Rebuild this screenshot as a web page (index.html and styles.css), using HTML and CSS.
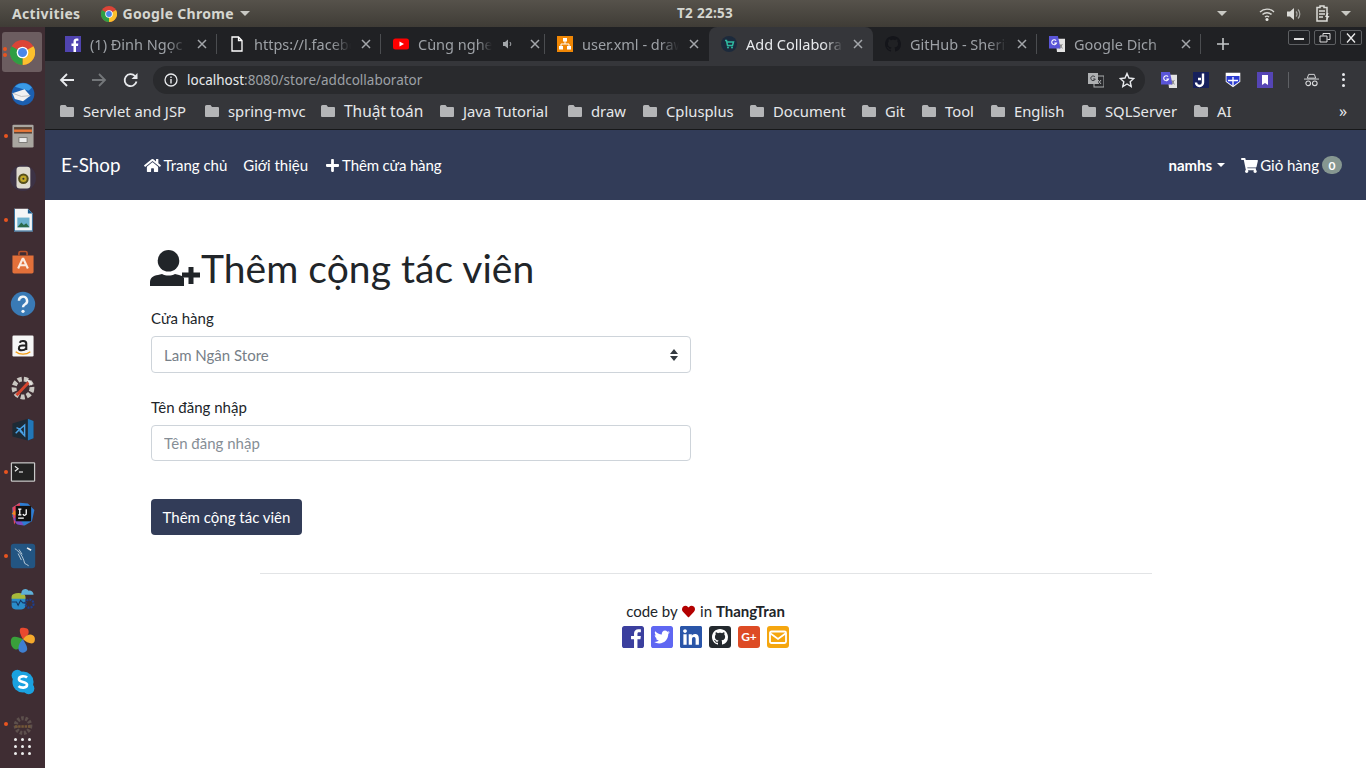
FILE: index.html
```html
<!DOCTYPE html>
<html lang="vi">
<head>
<meta charset="utf-8">
<title>Add Collaborator</title>
<link rel="stylesheet" href="styles.css">
</head>
<body>
<svg class="defs" width="0" height="0" aria-hidden="true">
  <symbol id="folder" viewBox="0 0 14 12"><path d="M1.5 0h4l1.5 2h6A1 1 0 0 1 14 3v8a1 1 0 0 1-1 1H1a1 1 0 0 1-1-1V1.500A1.500 1.500 0 0 1 1.500 0z" fill="#b4b5b7"/></symbol>
  <symbol id="x" viewBox="0 0 10 10"><path d="M1 1l8 8M9 1l-8 8" stroke="#a3a6aa" stroke-width="1.500" fill="none"/></symbol>
  <symbol id="gt" viewBox="0 0 18 18"><path d="M7 3h11v15H9z" fill="#e3e3e3"/><path d="M0 0h10l3 14H0z" fill="#5a55d8"/><path d="M8 5.200A2.800 2.800 0 1 0 8.500 8H6" fill="none" stroke="#fff" stroke-width="1.200"/><path d="M12 9l3 5M15 9l-3 5" stroke="#777" stroke-width="1"/></symbol>
  <symbol id="chrome" viewBox="0 0 32 32"><circle cx="16" cy="16" r="16" fill="#db4437"/><path d="M16 16L30 8A16 16 0 0 1 16 32z" fill="#fbc02d"/><path d="M16 16L16 32A16 16 0 0 1 2 8z" fill="#2f9e44"/><circle cx="16" cy="16" r="7.500" fill="#fff"/><circle cx="16" cy="16" r="5.800" fill="#4a87e8"/></symbol>
</svg>

<header class="topbar">
  <span class="activities">Activities</span>
  <span class="app"><svg class="ic16" viewBox="0 0 32 32"><use href="#chrome"/></svg>Google Chrome<i class="tri"></i></span>
  <span class="clock">T2 22:53</span>
  <span class="tray">
    <i class="tri"></i>
    <svg class="wifi" viewBox="0 0 16 14"><path d="M1 5a10 10 0 0 1 14 0M3.500 7.500a6.500 6.500 0 0 1 9 0M6 10a3 3 0 0 1 4 0" stroke="#d8d8d4" stroke-width="1.400" fill="none"/><circle cx="8" cy="12.500" r="1.500" fill="#e8e8e4"/></svg>
    <svg class="vol" viewBox="0 0 16 14"><path d="M1 4.500h3L8 1v12L4 9.500H1z" fill="#dcdcd8"/><path d="M10 4.500a3.500 3.500 0 0 1 0 5M12 2.500a6.500 6.500 0 0 1 0 9" stroke="#a8a8a4" stroke-width="1.200" fill="none"/></svg>
    <svg class="batt" viewBox="0 0 14 17"><path d="M1 2.500h3V1h4v1.500h3V16H1z" fill="none" stroke="#dcdcd8" stroke-width="1.500"/><path d="M3 6h6M3 9h6M3 12h4" stroke="#dcdcd8" stroke-width="1.300"/><path d="M11 8l-2 4h2l-1 4 3.500-5h-2l1-3z" fill="#dcdcd8"/></svg>
    <i class="tri"></i>
  </span>
</header>

<div class="desktop">
  <nav class="dock">
    <div class="dock-item active"><i class="dot"></i><i class="dot dot2"></i><svg class="dk" viewBox="0 0 32 32"><use href="#chrome"/></svg></div>
    <div class="dock-item"><svg class="dk" viewBox="0 0 32 32"><circle cx="16" cy="16" r="14" fill="#1b5fb0"/><path d="M6 7a14 14 0 0 1 21 1l-4 4z" fill="#3a9ae6"/><path d="M3 15l15-5 7 8-9 7-10-3z" fill="#f1f1f1"/><path d="M3 15l11 4 11-1" fill="none" stroke="#b5b5b5"/></svg></div>
    <div class="dock-item"><i class="dot"></i><svg class="dk" viewBox="0 0 32 32"><rect x="3" y="2" width="26" height="28" rx="1.500" fill="#a9a6a0"/><rect x="5" y="5" width="22" height="8" fill="#5c4436"/><rect x="5" y="8" width="22" height="3" fill="#e8783a"/><rect x="11" y="18" width="10" height="6" fill="#ececec" stroke="#6f6d69"/></svg></div>
    <div class="dock-item"><svg class="dk" viewBox="0 0 32 32"><circle cx="16" cy="16" r="16" fill="#3c3245"/><rect x="8" y="2" width="17" height="27" rx="4" fill="#dedbd0"/><circle cx="16.500" cy="17" r="6.500" fill="#57501c"/><circle cx="16.500" cy="17" r="4" fill="#c2a92a"/><circle cx="16.500" cy="17" r="1.300" fill="#333"/></svg></div>
    <div class="dock-item"><i class="dot"></i><svg class="dk" viewBox="0 0 32 32"><path d="M5 2h17l6 6v22H5z" fill="#f4f6f7"/><path d="M22 2l6 6h-6z" fill="#165a8e"/><path d="M5 2h1v28H5zM27 8h1v22h-1z M5 29h23v1H5z" fill="#165a8e"/><rect x="9" y="13" width="15" height="12" fill="#6db2cf"/><path d="M9 25l5-6 3 3 3-2 4 5z" fill="#2b6a4a"/></svg></div>
    <div class="dock-item"><svg class="dk" viewBox="0 0 32 32"><path d="M3 8h26v20a2 2 0 0 1-2 2H5a2 2 0 0 1-2-2z" fill="#e2703a"/><path d="M11 8V5a2 2 0 0 1 2-2h6a2 2 0 0 1 2 2v3" fill="none" stroke="#b9522a" stroke-width="2"/><path d="M16 11l-6 13M16 11l6 13M12 20h8" stroke="#fbeadf" stroke-width="2.600" fill="none"/></svg></div>
    <div class="dock-item"><svg class="dk" viewBox="0 0 32 32"><circle cx="16" cy="16" r="15" fill="#3a7ab5"/><path d="M11 12a5 5 0 1 1 7.500 4.300c-1.800 1-2.500 1.800-2.500 3.700" fill="none" stroke="#f2f6fa" stroke-width="3"/><circle cx="16" cy="25" r="2" fill="#f2f6fa"/></svg></div>
    <div class="dock-item"><svg class="dk" viewBox="0 0 32 32"><rect x="3" y="3" width="26" height="26" rx="1.500" fill="#f6f6f6"/><path d="M12 12c1-3 8-3 8 1v8M20 15c-8 0-9 1-9 4s6 3 9 0" fill="none" stroke="#222" stroke-width="2.600"/><path d="M7 23c5 4 13 4 18 0" fill="none" stroke="#f39c12" stroke-width="1.600"/></svg></div>
    <div class="dock-item"><svg class="dk" viewBox="0 0 32 32"><circle cx="16" cy="16" r="11" fill="none" stroke="#c9c6c1" stroke-width="6" stroke-dasharray="5 2.500"/><path d="M8 25L24 8" stroke="#d6452f" stroke-width="3.500"/><path d="M19 6a6 6 0 0 1 8 7l-3-2-2-3z" fill="#e4e2de"/></svg></div>
    <div class="dock-item"><svg class="dk" viewBox="0 0 32 32"><path d="M3 8l19-6 7 3v21l-7 3-19-5z" fill="#1d2a35"/><path d="M22 2l7 3v21l-7 3z" fill="#2277b8"/><path d="M7 20l5-5 4 5M8 13l4 2 6-5v13l-6-6" fill="none" stroke="#4aa3e8" stroke-width="1.800"/></svg></div>
    <div class="dock-item"><i class="dot"></i><svg class="dk" viewBox="0 0 32 32"><rect x="1" y="4" width="30" height="24" rx="1.500" fill="#c8c8c8"/><rect x="2.500" y="5.500" width="27" height="21" fill="#222"/><path d="M6 9l4 3-4 3" fill="none" stroke="#eee" stroke-width="1.400"/><path d="M11 16h5" stroke="#eee" stroke-width="1.400"/></svg></div>
    <div class="dock-item"><svg class="dk" viewBox="0 0 32 32"><path d="M3 8l9-6 10 1 8 8-3 14-9 5-10-2-5-9z" fill="#2f7dd3"/><path d="M3 8l9-6 1 14-8 13z" fill="#e8455e"/><path d="M4 22l5 7 8 1-7-12z" fill="#7b4bc2"/><path d="M2 16l4-5 3 7z" fill="#f08a24"/><rect x="7" y="6" width="19" height="19" fill="#111"/><path d="M10 10h4M12 10v7M10 17h4M20 10v5a2 2 0 0 1-4 1M10 21h7" stroke="#fff" stroke-width="1.600" fill="none"/></svg></div>
    <div class="dock-item"><i class="dot"></i><svg class="dk" viewBox="0 0 32 32"><rect x="1" y="1" width="30" height="30" rx="4" fill="#235582"/><path d="M6 7c5 3 10 9 12 18 2 1 3 2 5 3M15 14l-4-6M14 21l-4-8" fill="none" stroke="#c7d5e1" stroke-width="1.100"/><path d="M21 6l5 3" stroke="#eee" stroke-width="2"/></svg></div>
    <div class="dock-item"><svg class="dk" viewBox="0 0 32 32"><rect x="2" y="12" width="17" height="18" rx="5" fill="#2a8cc9"/><path d="M2 14a8 4 0 0 1 17 0v3H2z" fill="#a7b83a"/><path d="M14 10a5 5 0 0 1 9-3 5 5 0 0 1 6 5H13z" fill="#5fb0d9"/><circle cx="24" cy="23" r="5" fill="none" stroke="#1d3f8c" stroke-width="2.600" stroke-dasharray="2.500 1.300"/><path d="M2 21h6l2 4 3-6 3 3h3" stroke="#163764" stroke-width="1.300" fill="none"/></svg></div>
    <div class="dock-item"><svg class="dk" viewBox="0 0 32 32"><path d="M16 15C8 11 1 10 1 18s6 11 9 9 5-8 6-12z" fill="#39a03a"/><path d="M16 15C12 9 10 1 15 1s8 1 8 5-4 6-7 9z" fill="#e8492f"/><path d="M16 15c3-4 8-7 12-5s3 9 0 10-9-2-12-5z" fill="#f4a92c"/><path d="M16 15c-4 3-7 10-5 14s9 3 10-1-3-9-5-13z" fill="#3f7fd0"/></svg></div>
    <div class="dock-item"><svg class="dk" viewBox="0 0 32 32"><circle cx="9" cy="8" r="7" fill="#1ba2e0"/><circle cx="23" cy="24" r="7" fill="#1ba2e0"/><circle cx="16" cy="16" r="13" fill="#1ba2e0"/><path d="M21 10.500c-2-2-10-2.500-10 2 0 4.500 10 2.500 10 7 0 4.500-8 4-10.500 1.500" fill="none" stroke="#fff" stroke-width="3.200"/></svg></div>
    <div class="dock-item dim"><i class="dot"></i><svg class="dk" viewBox="0 0 32 32"><circle cx="16" cy="18" r="9" fill="none" stroke="#6b6058" stroke-width="5" stroke-dasharray="3 2"/><path d="M6 19h20" stroke="#8a6a3a" stroke-width="3" stroke-dasharray="3 1"/></svg></div>
    <div class="dock-grid"><i></i><i></i><i></i><i></i><i></i><i></i><i></i><i></i><i></i></div>
  </nav>

  <div class="window">
    <div class="tabstrip">
      <div class="tab"><svg class="fav" viewBox="0 0 16 16"><rect width="16" height="16" fill="#5044b0"/><path d="M11 16v-6h2l.3-2.400H11V6c0-.7.300-1.200 1.200-1.200h1.200V2.700C13 2.600 12.300 2.600 11.500 2.600 9.700 2.600 8.500 3.700 8.500 5.700v1.900h-2V10h2v6z" fill="#fff"/></svg><span class="title">(1) Đinh Ngọc Thắng</span><svg class="cl"><use href="#x"/></svg></div>
      <div class="tab"><svg class="fav" viewBox="0 0 16 16"><path d="M3 1h6.500L13 4.500V15H3z M9.500 1v3.500H13" fill="none" stroke="#fff" stroke-width="1.300"/></svg><span class="title">https://l.facebook.com</span><svg class="cl"><use href="#x"/></svg></div>
      <div class="tab"><svg class="fav" viewBox="0 0 16 16"><rect y="2.500" width="16" height="11" rx="2.500" fill="#f00"/><path d="M6.500 5.500L11 8l-4.500 2.500z" fill="#fff"/></svg><span class="title short">Cùng nghe nhạc</span><svg class="sound" viewBox="0 0 12 12"><path d="M1 4h2l3-2.500v9L3 8H1z" fill="#a3a6aa"/><path d="M8 4a3 3 0 0 1 0 4" stroke="#a3a6aa" fill="none"/></svg><svg class="cl"><use href="#x"/></svg></div>
      <div class="tab"><svg class="fav" viewBox="0 0 16 16"><rect width="16" height="16" fill="#f08705"/><path d="M8 4v4M4 12V8h8v4" stroke="#fff" fill="none"/><path d="M6 2h4v3.500H6zM2 10h4v3.500H2zM10 10h4v3.500h-4z" fill="#fff"/></svg><span class="title">user.xml - draw.io</span><svg class="cl"><use href="#x"/></svg></div>
      <div class="tab tab-active"><svg class="fav" viewBox="0 0 16 16"><circle cx="8" cy="8" r="8" fill="#1c2a3c"/><path d="M4 4.500h1.500l1 5h5L12.500 6H6" stroke="#2fb9a0" stroke-width="1.500" fill="none"/><circle cx="7" cy="11.500" r="1" fill="#2fb9a0"/><circle cx="11" cy="11.500" r="1" fill="#2fb9a0"/></svg><span class="title">Add Collaborator</span><svg class="cl"><use href="#x"/></svg></div>
      <div class="tab"><svg class="fav" viewBox="0 0 16 16"><path fill="#14151a" d="M8 0C3.580 0 0 3.580 0 8c0 3.540 2.290 6.530 5.470 7.590.4.070.55-.17.55-.38 0-.19-.01-.82-.01-1.490-2.010.37-2.530-.49-2.690-.94-.09-.23-.48-.94-.82-1.130-.28-.15-.68-.52-.01-.53.63-.01 1.080.58 1.230.82.72 1.210 1.870.87 2.330.66.07-.52.28-.87.51-1.070-1.780-.2-3.640-.89-3.640-3.950 0-.87.31-1.590.82-2.150-.08-.2-.36-1.020.08-2.120 0 0 .67-.21 2.200.82.64-.18 1.320-.27 2-.27.68 0 1.360.09 2 .27 1.530-1.040 2.200-.82 2.200-.82.44 1.100.16 1.920.08 2.120.51.56.82 1.270.82 2.150 0 3.070-1.870 3.750-3.650 3.950.29.25.54.73.54 1.480 0 1.070-.01 1.930-.01 2.200 0 .21.15.46.55.38A8.013 8.013 0 0016 8c0-4.420-3.580-8-8-8z"/></svg><span class="title">GitHub - Sheriff</span><svg class="cl"><use href="#x"/></svg></div>
      <div class="tab"><svg class="fav" viewBox="0 0 18 18"><use href="#gt"/></svg><span class="title">Google Dịch</span><svg class="cl"><use href="#x"/></svg></div>
      <svg class="newtab" viewBox="0 0 12 12"><path d="M6 0v12M0 6h12" stroke="#c4c7c9" stroke-width="1.600"/></svg>
      <div class="winctl">
        <span class="wbtn"><svg viewBox="0 0 12 10"><path d="M1 6h10" stroke="#ddd" stroke-width="2"/></svg></span>
        <span class="wbtn"><svg viewBox="0 0 12 10"><path d="M4 2.500V.5h7v6H8.500M1 3h7v6H1z" stroke="#ddd" fill="none"/></svg></span>
        <span class="wbtn"><svg viewBox="0 0 12 10"><path d="M2 .5l8 9M10 .5l-8 9" stroke="#eee" stroke-width="1.300"/></svg></span>
      </div>
    </div>

    <div class="toolbar">
      <svg class="tb" viewBox="0 0 16 16"><path d="M15 8H2M8 2L2 8l6 6" stroke="#e8eaed" stroke-width="1.800" fill="none"/></svg>
      <svg class="tb" viewBox="0 0 16 16"><path d="M1 8h13M8 2l6 6-6 6" stroke="#74777a" stroke-width="1.800" fill="none"/></svg>
      <svg class="tb" viewBox="0 0 16 16"><path d="M13.500 9.500A6 6 0 1 1 12 4" stroke="#e8eaed" stroke-width="1.800" fill="none"/><path d="M14.500 1v6h-6z" fill="#e8eaed"/></svg>
      <div class="omnibox">
        <svg class="info" viewBox="0 0 14 14"><circle cx="7" cy="7" r="6" fill="none" stroke="#e8eaed" stroke-width="1.300"/><path d="M7 6v4.500M7 3.500v1.500" stroke="#e8eaed" stroke-width="1.400"/></svg>
        <span class="url"><b>localhost</b>:8080/store/addcollaborator</span>
        <svg class="omni-t" viewBox="0 0 16 16"><rect x="0" y="1" width="10" height="11" fill="#aeb0b2"/><rect x="6" y="4" width="10" height="11" fill="none" stroke="#aeb0b2"/><path d="M7 5A2.300 2.300 0 1 0 7.300 7H5.200" fill="none" stroke="#35363a"/><path d="M10 8l3 4M13 8l-3 4" stroke="#aeb0b2"/></svg>
        <svg class="omni-s" viewBox="0 0 16 16"><path d="M8 1.500l2 4.500 4.800.5-3.600 3.200 1 4.800L8 12l-4.200 2.500 1-4.800L1.200 6.500 6 6z" fill="none" stroke="#e8eaed" stroke-width="1.400"/></svg>
      </div>
      <div class="exts">
        <svg class="ext" viewBox="0 0 18 18"><use href="#gt"/></svg>
        <svg class="ext" viewBox="0 0 16 16"><rect width="16" height="16" fill="#16205c"/><path d="M10 1.500v9a3.500 3.500 0 0 1-7 0M5 7h3" stroke="#fff" stroke-width="2.400" fill="none"/></svg>
        <svg class="ext" viewBox="0 0 16 16"><path d="M.7.7h14.600v9L8 15.300.7 9.700z" fill="#fff"/><path d="M1.500 4h13v5.300L8 14 1.500 9.300z" fill="#2a3bd0"/><path d="M8 5v9M3 8.500h10" stroke="#fff" stroke-width="1.300"/></svg>
        <svg class="ext" viewBox="0 0 16 16"><rect width="16" height="16" fill="#5545b5"/><path d="M5 3h6v10L8 11l-3 2z" fill="#fff"/></svg>
      </div>
      <i class="tbsep"></i>
      <svg class="incog" viewBox="0 0 16 14"><path d="M5 1h6l1.500 4h-9zM0 6h16" stroke="#d9dadc" stroke-width="1" fill="none"/><circle cx="4.500" cy="10.500" r="2.500" fill="none" stroke="#d9dadc" stroke-width="1.200"/><circle cx="11.500" cy="10.500" r="2.500" fill="none" stroke="#d9dadc" stroke-width="1.200"/></svg>
      <span class="kebab"><i></i><i></i><i></i></span>
    </div>

    <div class="bookmarks">
      <a class="bm"><svg class="fold"><use href="#folder"/></svg>Servlet and JSP</a>
      <a class="bm"><svg class="fold"><use href="#folder"/></svg>spring-mvc</a>
      <a class="bm"><svg class="fold"><use href="#folder"/></svg><span class="big">Thuật toán</span></a>
      <a class="bm"><svg class="fold"><use href="#folder"/></svg>Java Tutorial</a>
      <a class="bm"><svg class="fold"><use href="#folder"/></svg>draw</a>
      <a class="bm"><svg class="fold"><use href="#folder"/></svg>Cplusplus</a>
      <a class="bm"><svg class="fold"><use href="#folder"/></svg>Document</a>
      <a class="bm"><svg class="fold"><use href="#folder"/></svg>Git</a>
      <a class="bm"><svg class="fold"><use href="#folder"/></svg>Tool</a>
      <a class="bm"><svg class="fold"><use href="#folder"/></svg>English</a>
      <a class="bm"><svg class="fold"><use href="#folder"/></svg>SQLServer</a>
      <a class="bm"><svg class="fold"><use href="#folder"/></svg>AI</a>
      <span class="more">»</span>
    </div>

    <div class="page">
      <div class="navbar">
        <a class="brand">E-Shop</a>
        <a class="nl"><svg class="ni home" viewBox="0 0 576 512"><path d="M280.370 148.260L96 300.110V464a16 16 0 0 0 16 16l112.060-.29a16 16 0 0 0 15.920-16V368a16 16 0 0 1 16-16h64a16 16 0 0 1 16 16v95.640a16 16 0 0 0 16 16.050L464 480a16 16 0 0 0 16-16V300L295.670 148.260a12.190 12.190 0 0 0-15.300 0zM571.600 251.470L488 182.560V44.050a12 12 0 0 0-12-12h-56a12 12 0 0 0-12 12v72.610L318.470 43a48 48 0 0 0-61 0L4.340 251.470a12 12 0 0 0-1.600 16.900l25.500 31A12 12 0 0 0 45.150 301l235.220-193.740a12.190 12.190 0 0 1 15.300 0L530.900 301a12 12 0 0 0 16.900-1.600l25.500-31a12 12 0 0 0-1.700-16.930z"/></svg>Trang chủ</a>
        <a class="nl about">Giới thiệu</a>
        <a class="nl addstore"><svg class="ni plus" viewBox="0 0 448 512"><path d="M416 208H272V64c0-17.670-14.330-32-32-32h-32c-17.670 0-32 14.330-32 32v144H32c-17.670 0-32 14.330-32 32v32c0 17.670 14.330 32 32 32h144v144c0 17.670 14.330 32 32 32h32c17.670 0 32-14.330 32-32V304h144c17.670 0 32-14.330 32-32v-32c0-17.670-14.330-32-32-32z"/></svg>Thêm cửa hàng</a>
        <a class="nl user">namhs<i class="caret"></i></a>
        <a class="nl cart"><svg class="ni home" viewBox="0 0 576 512"><path d="M528.120 301.319l47.273-208C578.806 78.301 567.391 64 551.990 64H159.208l-9.166-44.810C147.758 8.021 137.930 0 126.529 0H24C10.745 0 0 10.745 0 24v16c0 13.255 10.745 24 24 24h69.883l70.248 343.435C147.325 417.100 136 435.222 136 456c0 30.928 25.072 56 56 56s56-25.072 56-56c0-15.674-6.447-29.835-16.824-40h209.647C430.447 426.165 424 440.326 424 456c0 30.928 25.072 56 56 56s56-25.072 56-56c0-22.172-12.888-41.332-31.579-50.405l5.517-24.276c3.413-15.018-8.002-29.319-23.403-29.319H218.117l-6.545-32h293.145c11.206 0 20.920-7.754 23.403-18.681z"/></svg>Giỏ hàng<span class="badge">0</span></a>
      </div>

      <main class="content">
        <h1 class="heading"><svg class="h-ic" viewBox="0 0 50 36"><circle cx="18.500" cy="10.800" r="10.800"/><path d="M0 36v-3.500C0 28 3 25.500 8 25l4-1c4 2 9 2 13 0l4 1c2 .4 4 1.500 5 3v8z"/><path d="M32 22.500h6.500V17h5v5.500H50v5h-6.500V34h-5v-6.500H32z"/></svg>Thêm cộng tác viên</h1>
        <form class="form">
          <div class="group">
            <label class="lbl">Cửa hàng</label>
            <div class="control select">Lam Ngân Store<svg class="updown" viewBox="0 0 8 12"><path d="M4 0l4 5H0zM4 12L0 7h8z"/></svg></div>
          </div>
          <div class="group second">
            <label class="lbl">Tên đăng nhập</label>
            <input class="control" placeholder="Tên đăng nhập">
          </div>
          <button class="btn" type="button">Thêm cộng tác viên</button>
        </form>
        <hr class="rule">
        <footer class="foot">
          <p class="credit">code by <svg class="heart" viewBox="0 0 512 512"><path d="M462.300 62.600C407.500 15.900 326 24.300 275.700 76.200L256 96.500l-19.700-20.300C186.100 24.300 104.500 15.900 49.700 62.600c-62.800 53.600-66.100 149.800-9.900 207.900l193.500 199.800c12.500 12.900 32.800 12.900 45.300 0l193.500-199.800c56.300-58.100 53-154.300-9.800-207.900z"/></svg> in <b>ThangTran</b></p>
          <div class="socials">
            <svg class="so fb" viewBox="0 32 448 448"><path d="M448 80v352c0 26.500-21.500 48-48 48h-85.300V302.800h60.600l8.700-67.600h-69.300V192c0-19.600 5.400-32.900 33.500-32.900H384V98.700c-6.200-.8-27.400-2.700-52.200-2.700-51.600 0-87 31.500-87 89.400v49.900H184v67.600h60.900V480H48c-26.500 0-48-21.500-48-48V80c0-26.500 21.500-48 48-48h352c26.500 0 48 21.500 48 48z"/></svg>
            <svg class="so tw" viewBox="0 32 448 448"><path d="M400 32H48C21.500 32 0 53.500 0 80v352c0 26.500 21.500 48 48 48h352c26.500 0 48-21.500 48-48V80c0-26.500-21.500-48-48-48zm-48.900 158.800c.2 2.800.2 5.700.2 8.500 0 86.700-66 186.600-186.600 186.600-37.200 0-71.700-10.800-100.700-29.400 5.300.6 10.400.8 15.800.8 30.700 0 58.900-10.400 81.400-28-28.800-.6-53-19.500-61.300-45.500 10.100 1.500 19.200 1.500 29.600-1.200-30-6.100-52.500-32.500-52.500-64.400v-.8c8.700 4.900 18.900 7.900 29.600 8.300a65.447 65.447 0 0 1-29.200-54.600c0-12.200 3.200-23.400 8.900-33.100 32.300 39.800 80.800 65.800 135.200 68.600-9.300-44.500 24-80.600 64-80.600 18.900 0 35.900 7.900 47.900 20.700 14.800-2.800 29-7.200 41.600-14.800-4.900 15.200-15.200 28-28.800 36.100 13.200-1.400 26-5.100 37.800-10.200-8.900 13.100-20.100 24.700-32.900 34z"/></svg>
            <svg class="so li" viewBox="0 32 448 448"><path d="M416 32H31.900C14.300 32 0 46.500 0 64.300v383.400C0 465.500 14.300 480 31.900 480H416c17.600 0 32-14.500 32-32.300V64.300c0-17.800-14.400-32.300-32-32.300zM135.400 416H69V202.200h66.500V416zm-33.200-243c-21.300 0-38.500-17.300-38.500-38.500S80.900 96 102.200 96c21.200 0 38.500 17.300 38.500 38.500 0 21.300-17.200 38.500-38.500 38.500zm282.100 243h-66.400V312c0-24.800-.5-56.700-34.500-56.700-34.600 0-39.900 27-39.900 54.900V416h-66.400V202.200h63.700v29.200h.9c8.900-16.800 30.600-34.500 62.900-34.500 67.200 0 79.700 44.300 79.700 101.900V416z"/></svg>
            <svg class="so gh" viewBox="0 0 22 22"><rect width="22" height="22" rx="3" fill="#24292e"/><path transform="translate(3 3)" fill="#fff" d="M8 0C3.580 0 0 3.580 0 8c0 3.540 2.290 6.530 5.470 7.590.4.070.55-.17.55-.38 0-.19-.01-.82-.01-1.490-2.010.37-2.530-.49-2.690-.94-.09-.23-.48-.94-.82-1.130-.28-.15-.68-.52-.01-.53.63-.01 1.080.58 1.230.82.72 1.210 1.870.87 2.330.66.07-.52.28-.87.51-1.070-1.780-.2-3.640-.89-3.640-3.950 0-.87.31-1.590.82-2.150-.08-.2-.36-1.020.08-2.120 0 0 .67-.21 2.200.82.64-.18 1.320-.27 2-.27.68 0 1.360.09 2 .27 1.530-1.040 2.200-.82 2.200-.82.44 1.100.16 1.920.08 2.120.51.56.82 1.270.82 2.150 0 3.070-1.870 3.750-3.650 3.950.29.25.54.73.54 1.480 0 1.070-.01 1.930-.01 2.200 0 .21.15.46.55.38A8.013 8.013 0 0016 8c0-4.420-3.580-8-8-8z"/></svg>
            <span class="so gp">G+</span>
            <svg class="so em" viewBox="0 0 22 22"><rect width="22" height="22" rx="3" fill="#f5a60f"/><rect x="3" y="5.500" width="16" height="11.500" rx="1.500" fill="none" stroke="#fff" stroke-width="1.800"/><path d="M3.500 7.500L11 13l7.500-5.500" fill="none" stroke="#fff" stroke-width="1.800"/></svg>
          </div>
        </footer>
      </main>
    </div>
  </div>
</div>
</body>
</html>
```
FILE: styles.css
```css
* { box-sizing: border-box; }
html, body { margin: 0; height: 100%; }
body { width: 1366px; height: 768px; overflow: hidden; display: flex; flex-direction: column; background: #fff; font-family: "Lato", sans-serif; }
.defs { display: block; height: 0; }
i { display: block; font-style: normal; }

.topbar { flex: 0 0 27px; display: flex; align-items: center; padding: 0 0 0 12px; background: linear-gradient(#56524b, #3f3c36); color: #d5d6d0; font: 700 14px "Noto Sans", sans-serif; position: relative; }
.activities { letter-spacing: .35px; }
.app { display: flex; align-items: center; margin-left: 20px; letter-spacing: .3px; }
.ic16 { width: 16px; height: 16px; margin-right: 6px; }
.tri { width: 0; height: 0; border: 5px solid transparent; border-top-color: #c9c9c4; border-bottom-width: 0; margin-left: 6px; }
.clock { position: absolute; left: 677px; top: 4px; letter-spacing: .3px; font-size: 13.500px; }
.tray { margin-left: auto; display: flex; align-items: center; padding-right: 15px; }
.wifi { width: 16px; height: 14px; margin-left: 32px; }
.vol { width: 16px; height: 14px; margin-left: 11px; }
.batt { width: 14px; height: 17px; margin-left: 14px; margin-right: 5px; }

.desktop { flex: 1; display: flex; min-height: 0; }
.dock { flex: 0 0 45px; background: #3f2d33; padding-top: 4px; display: flex; flex-direction: column; align-items: center; }
.dock-item { width: 40px; height: 42px; display: flex; align-items: center; justify-content: center; position: relative; flex: none; }
.dock-item.active { height: 40px; margin: 1px 0 1px -1px; background: #6c5d60; border-radius: 3px; }
.dock-item.dim .dk { opacity: .7; }
.dk { width: 26px; height: 26px; }
.dock-item.active .dk { width: 25px; height: 25px; }
.dot { position: absolute; left: 1px; top: 19px; width: 4px; height: 4px; border-radius: 50%; background: #e95420; }
.dock-item.active .dot { top: 15px; left: 1px; }
.dock-item.active .dot2 { top: 21px; }
.dock-grid { display: grid; grid-template-columns: repeat(3, 3px); gap: 4px; margin-top: -7px; }
.dock-grid i { width: 3px; height: 3px; border-radius: 50%; background: #eee; }

.window { flex: 1; min-width: 0; display: flex; flex-direction: column; }
.tabstrip { flex: 0 0 34px; background: #202124; display: flex; padding-left: 8px; position: relative; }
.tab { width: 164px; height: 34px; padding: 0 10px 1px 12px; display: flex; align-items: center; color: #9da1a6; font: 400 14.500px "Noto Sans", sans-serif; position: relative; }
.tab::after { content: ""; position: absolute; right: 0; top: 7px; height: 20px; width: 1px; background: #4b4d50; }
.tab:nth-child(4)::after, .tab-active::after { display: none; }
.tab-active { background: #35363a; color: #e8eaed; border-radius: 8px 8px 0 0; }
.fav { width: 16px; height: 16px; flex: none; margin-right: 9px; }
.title { flex: 1; min-width: 0; white-space: nowrap; overflow: hidden; -webkit-mask-image: linear-gradient(to right, #000 80%, transparent); mask-image: linear-gradient(to right, #000 80%, transparent); }
.title.short { flex: 0 0 74px; }
.sound { width: 12px; height: 12px; margin-left: 10px; margin-right: 10px; flex: none; }
.cl { width: 10px; height: 10px; flex: none; margin-left: 10px; }
.title.short + .sound + .cl { margin-left: 6px; }
.newtab { width: 12px; height: 12px; margin: 11px 0 0 16px; }
.winctl { display: flex; gap: 4px; margin-left: auto; padding: 3px 4px 0 0; }
.wbtn { width: 22px; height: 15px; border: 1px solid #5d5f62; border-radius: 2px; display: flex; align-items: center; justify-content: center; }
.wbtn svg { width: 12px; height: 10px; }

.toolbar { flex: 0 0 33px; background: #35363a; display: flex; align-items: center; padding: 4px 0 0 14px; }
.tb { width: 16px; height: 16px; margin-right: 16px; }
.omnibox { width: 992px; height: 28px; margin-left: -2px; margin-right: 16px; background: #292a2d; border-radius: 14px; display: flex; align-items: center; padding-left: 11px; color: #9da1a6; font: 400 13.500px "Noto Sans", sans-serif; }
.info { width: 14px; height: 14px; margin-right: 9px; }
.url b { color: #e8eaed; font-weight: 400; }
.omni-t { width: 16px; height: 16px; margin-left: auto; margin-right: 15px; }
.omni-s { width: 16px; height: 16px; margin-right: 10px; }
.exts { display: flex; gap: 16px; }
.ext { width: 16px; height: 16px; }
.tbsep { width: 1px; height: 16px; background: #5f6165; margin-left: 15px; }
.incog { width: 15px; height: 14px; margin-left: 15px; }
.kebab { display: flex; flex-direction: column; gap: 2.500px; margin-left: 23px; }
.kebab i { width: 3px; height: 3px; background: #e8eaed; border-radius: 50%; }

.bookmarks { flex: 0 0 36px; background: #35363a; border-bottom: 1px solid #17181a; display: grid; grid-template-columns: 145px 116px 119px 128px 75px 107px 112px 60px 69px 91px 112px 138px auto; align-items: center; padding: 0 0 1px 15px; color: #e6e8ea; font: 400 14.800px "Noto Sans", sans-serif; }
.bm { display: flex; align-items: center; white-space: nowrap; }
.big { font-size: 15.500px; }
.fold { width: 14px; height: 12px; margin-right: 9px; flex: none; }
.more { font-size: 16px; padding-left: 7px; }

.page { flex: 1; min-height: 0; display: flex; flex-direction: column; }
.navbar { flex: 0 0 70px; background: #323c58; display: flex; align-items: center; padding: 0 24px 0 16px; color: #fff; font-size: 15px; }
.brand { font-size: 18.750px; margin: 0 24px 2px 0; }
.nl { display: flex; align-items: center; margin-right: 16px; white-space: nowrap; }
.about { margin-right: 18px; }
.addstore { letter-spacing: -.15px; }
.ni { fill: #fff; flex: none; }
.ni.home { width: 17px; height: 15px; margin-right: 2px; }
.ni.plus { width: 13px; height: 15px; margin-right: 3px; }
.user { margin-left: auto; font-weight: 700; }
.caret { width: 0; height: 0; border: 4.500px solid transparent; border-top-color: #fff; border-bottom-width: 0; margin-left: 5px; }
.cart { margin-right: 0; }
.badge { margin-left: 3px; background: #869791; color: #fff; font-size: 12px; font-weight: 700; border-radius: 9px; width: 20px; height: 18px; display: flex; align-items: center; justify-content: center; }

.content { flex: 1; padding: 40px 0 0 106px; color: #212529; font-size: 15px; }
.heading { margin: 0 0 11px; font-size: 39px; font-weight: 400; line-height: 56px; display: flex; align-items: center; height: 56px; letter-spacing: .05px; }
.h-ic { width: 50px; height: 36px; fill: #212529; margin-right: 1px; margin-left: -1px; }
.form { width: 540px; }
.group { margin-bottom: 16px; }
.second { margin-top: 23px; }
.lbl { display: block; font-size: 15px; line-height: 22px; margin-bottom: 7px; }
.control { display: flex; align-items: center; width: 100%; height: 37px; border: 1px solid #ced4da; border-radius: 4px; padding: 0 12px; background: #fff; font: 400 15px "Lato", sans-serif; color: #778088; position: relative; }
input.control { height: 36px; }
input.control::placeholder { color: #868e96; opacity: 1; }
.updown { width: 8px; height: 12px; position: absolute; right: 12px; top: 12px; fill: #343a40; }
.btn { display: block; height: 36px; margin-top: 38px; padding: 0; width: 151px; background: #323c58; color: #fff; border: 0; border-radius: 4px; font: 400 15px "Lato", sans-serif; white-space: nowrap; }
.rule { width: 892px; margin: 38px 0 0 109px; border: 0; border-top: 1px solid #e2e4e6; }
.foot { width: 892px; margin-left: 109px; text-align: center; padding-top: 27px; font-size: 15px; }
.credit { margin: 0; line-height: 20px; padding-right: 1px; }
.heart { width: 13px; height: 13px; fill: #b30000; vertical-align: -1px; margin: 0 1px; }
.socials { display: flex; justify-content: center; gap: 7px; margin-top: 5px; padding-right: 1px; }
.so { width: 22px; height: 22px; flex: none; }
.fb { fill: #3b3f9e; }
.tw { fill: #5f67f2; }
.li { fill: #2a55a8; }
.gp { background: #dd4b25; color: #fff; border-radius: 3px; font: 700 12px/22px "Lato", sans-serif; text-align: center; }
```
